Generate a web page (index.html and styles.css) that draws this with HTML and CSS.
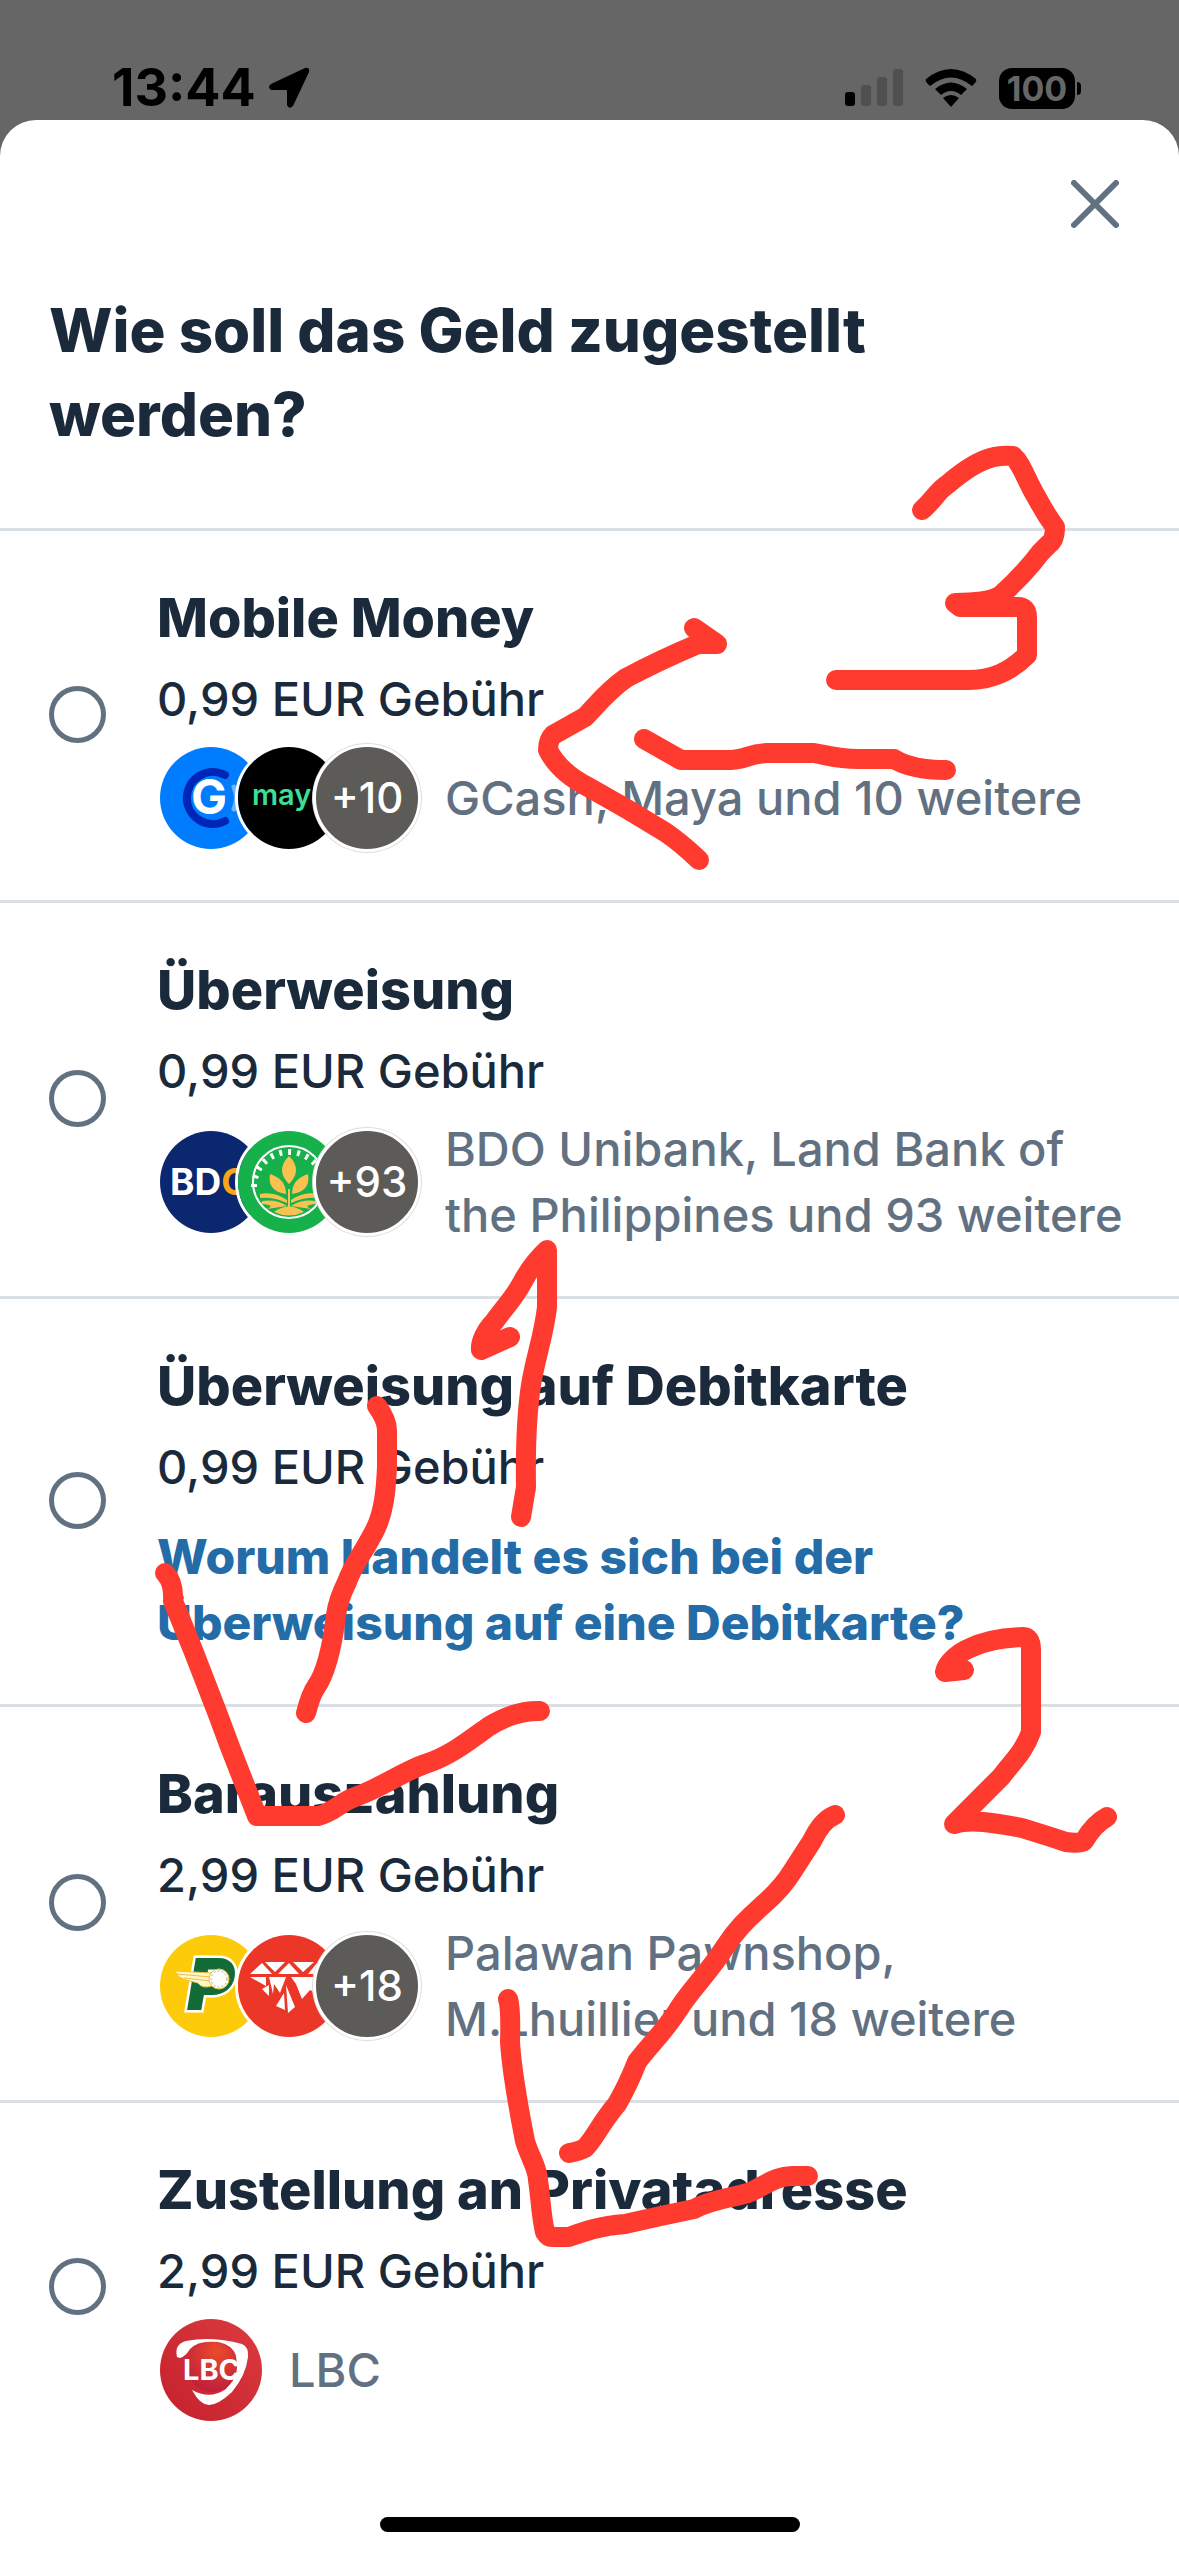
FILE: index.html
```html
<!DOCTYPE html>
<html lang="de">
<head>
    <meta charset="UTF-8">
    <meta name="viewport" content="width=device-width, initial-scale=1.0">
    <title>Zustellung</title>
    <link rel="stylesheet" href="styles.css">
</head>
<body>
    <!-- Status bar -->
    <header class="status-bar">
        <div class="status-left">
            <span class="time">13:44</span>
            <svg class="location" viewBox="0 0 42 42" aria-hidden="true">
                <path d="M37 1 L3 17 Q-1 20 3 23 L18 23 Q19 23 19 24 L19 38 Q21 43 25 39 L41 5 Q42 0 37 1 Z"/>
            </svg>
        </div>
        <div class="status-right">
            <svg class="signal" viewBox="0 0 58 38" aria-hidden="true">
                <rect x="0" y="23" width="10" height="14" rx="3"/>
                <rect class="off" x="16" y="16" width="10" height="21" rx="3"/>
                <rect class="off" x="32" y="8" width="10" height="29" rx="3"/>
                <rect class="off" x="48" y="0" width="10" height="37" rx="3"/>
            </svg>
            <svg class="wifi" viewBox="0 0 52 38" aria-hidden="true">
                <path d="M1 10 Q26 -10 51 10 Q52 12 50 14 L47 17 Q26 0 5 17 L2 14 Q0 12 1 10 Z"/>
                <path d="M10 20 Q26 7 42 20 L36 26 Q26 18 16 26 Z"/>
                <path d="M18 29 Q26 23 34 29 L26 38 Z"/>
            </svg>
            <div class="battery"><span class="battery-level">100</span></div>
        </div>
    </header>

    <main class="sheet">
        <div class="sheet-top">
            <button type="button" class="close" aria-label="Schließen">
                <svg viewBox="0 0 48 48" aria-hidden="true"><path d="M3 3 L45 45 M45 3 L3 45"/></svg>
            </button>
        </div>
        <h1 class="heading">Wie soll das Geld zugestellt werden?</h1>

        <ul class="options">
            <li class="option">
                <input type="radio" class="radio" name="delivery" id="mobile">
                <div class="details">
                    <label class="title" for="mobile">Mobile Money</label>
                    <p class="fee">0,99 EUR Gebühr</p>
                    <div class="providers">
                        <div class="logos">
                            <!-- GCash -->
                            <svg class="logo" viewBox="0 0 102 102" aria-hidden="true">
                                <rect width="102" height="102" fill="#007dfe"/>
                                <path d="M65 28 A26 26 0 1 0 65 74" fill="none" stroke="#0026b8" stroke-width="8" stroke-linecap="round"/>
                                <path d="M74 40 Q79 51 74 62" fill="none" stroke="#6cb5ff" stroke-width="5" stroke-linecap="round"/>
                                <text class="logo-g" x="49" y="67" text-anchor="middle">G</text>
                            </svg>
                            <!-- Maya -->
                            <svg class="logo" viewBox="0 0 102 102" aria-hidden="true">
                                <rect width="102" height="102" fill="#000"/>
                                <text class="logo-maya" x="14" y="58">maya</text>
                            </svg>
                            <span class="logo more">+10</span>
                        </div>
                        <p class="names">GCash, Maya und 10 weitere</p>
                    </div>
                </div>
            </li>

            <li class="option">
                <input type="radio" class="radio" name="delivery" id="bank">
                <div class="details">
                    <label class="title" for="bank">Überweisung</label>
                    <p class="fee">0,99 EUR Gebühr</p>
                    <div class="providers">
                        <div class="logos">
                            <!-- BDO -->
                            <svg class="logo" viewBox="0 0 102 102" aria-hidden="true">
                                <rect width="102" height="102" fill="#0a2770"/>
                                <text class="logo-bdo" x="10" y="64">BD<tspan fill="#f9a51a">O</tspan></text>
                            </svg>
                            <!-- Land Bank -->
                            <svg class="logo" viewBox="0 0 102 102" aria-hidden="true">
                                <rect width="102" height="102" fill="#16b14b"/>
                                <circle cx="51" cy="51" r="36" fill="none" stroke="#fff" stroke-width="2"/>
                                <path d="M16 56 A35 35 0 1 1 86 56" fill="none" stroke="#fff" stroke-width="6" stroke-dasharray="3 6"/>
                                <g fill="#fbc150">
                                    <path d="M51 25 Q37 39 51 53 Q65 39 51 25 Z"/>
                                    <path d="M32 43 Q29 60 48 63 Q48 48 32 43 Z"/>
                                    <path d="M70 43 Q73 60 54 63 Q54 48 70 43 Z"/>
                                    <path d="M22 63 Q36 60 49 69 L49 72 Q36 66 22 67 Z"/>
                                    <path d="M80 63 Q66 60 53 69 L53 72 Q66 66 80 67 Z"/>
                                    <path d="M24 70 Q38 68 49 75 L29 78 Q38 74 24 73 Z"/>
                                    <path d="M78 70 Q64 68 53 75 L73 78 Q64 74 78 73 Z"/>
                                    <path d="M36 81 Q51 70 66 81 Q51 88 36 81 Z"/>
                                </g>
                                <path d="M51 58 V83" stroke="#fbc150" stroke-width="2"/>
                            </svg>
                            <span class="logo more">+93</span>
                        </div>
                        <p class="names">BDO Unibank, Land Bank of the Philippines und 93 weitere</p>
                    </div>
                </div>
            </li>

            <li class="option">
                <input type="radio" class="radio" name="delivery" id="debit">
                <div class="details">
                    <label class="title" for="debit">Überweisung auf Debitkarte</label>
                    <p class="fee">0,99 EUR Gebühr</p>
                    <a class="help" href="#">Worum handelt es sich bei der Überweisung auf eine Debitkarte?</a>
                </div>
            </li>

            <li class="option">
                <input type="radio" class="radio" name="delivery" id="cash">
                <div class="details">
                    <label class="title" for="cash">Barauszahlung</label>
                    <p class="fee">2,99 EUR Gebühr</p>
                    <div class="providers">
                        <div class="logos">
                            <!-- Palawan -->
                            <svg class="logo" viewBox="0 0 102 102" aria-hidden="true">
                                <rect width="102" height="102" fill="#fdcb0a"/>
                                <text class="logo-p" x="27" y="75">P</text>
                                <path d="M15 36 L52 38 L52 51 Q42 54 38 48 L26 45 L19 42 Z" fill="#fff6cf" stroke="#eebf3d" stroke-width="1"/>
                                <path d="M17 39 L51 42 M24 43 L51 46" stroke="#eebf3d" stroke-width="1"/>
                                <circle cx="59" cy="44" r="10" fill="#fff" stroke="#eebf3d" stroke-width="1"/>
                                <circle cx="59" cy="44" r="8" fill="none" stroke="#9bb68a" stroke-width="1" stroke-dasharray="2 2"/>
                            </svg>
                            <!-- M Lhuillier -->
                            <svg class="logo" viewBox="0 0 102 102" aria-hidden="true">
                                <rect width="102" height="102" fill="#ec3627"/>
                                <g fill="#fff">
                                    <path d="M24 28 L12 39 L34 39 Z M27 27 H47 L37 37 Z M51 28 L40 39 H61 Z M55 27 H76 L65 37 Z M79 28 L70 39 H90 Z"/>
                                    <path d="M12 42 H28 V51 Z M24 54 L31 50 V61 Z"/>
                                    <path d="M31 42 H48 L42 58 L36 49 L35 59 Z"/>
                                    <path d="M48 50 L50 78 L57 72 Z M46 58 L47 75 L38 71 Z"/>
                                    <path d="M53 42 H90 L78 58 L72 55 L64 64 L58 49 Z"/>
                                </g>
                            </svg>
                            <span class="logo more">+18</span>
                        </div>
                        <p class="names">Palawan Pawnshop, M.Lhuillier und 18 weitere</p>
                    </div>
                </div>
            </li>

            <li class="option">
                <input type="radio" class="radio" name="delivery" id="home">
                <div class="details">
                    <label class="title" for="home">Zustellung an Privatadresse</label>
                    <p class="fee">2,99 EUR Gebühr</p>
                    <div class="providers">
                        <div class="logos">
                            <!-- LBC -->
                            <svg class="logo" viewBox="0 0 102 102" aria-hidden="true">
                                <defs>
                                    <linearGradient id="lbcBack" x1="0" y1="1" x2="1" y2="0">
                                        <stop offset="0" stop-color="#c3202c"/>
                                        <stop offset="1" stop-color="#dd3b40"/>
                                    </linearGradient>
                                    <radialGradient id="lbcBall" cx="0.6" cy="0.2" r="0.8">
                                        <stop offset="0" stop-color="#ea4a2a"/>
                                        <stop offset="1" stop-color="#c01f3c"/>
                                    </radialGradient>
                                </defs>
                                <rect width="102" height="102" fill="url(#lbcBack)"/>
                                <path d="M17 38 Q14 25 26 22 Q52 17 82 25 Q89 28 88 38 Q86 56 72 73 Q58 86 49 86 Q40 86 32 71 Q50 81 66 70 Q79 55 76 37 Q73 26 58 23 Q38 21 30 30 Q25 38 20 39 Z" fill="#fff"/>
                                <circle cx="52" cy="48" r="25" fill="url(#lbcBall)"/>
                                <text class="logo-lbc" x="23" y="61">LBC</text>
                            </svg>
                        </div>
                        <p class="names">LBC</p>
                    </div>
                </div>
            </li>
        </ul>
        <div class="home-indicator"></div>
    </main>

    <!-- Handwritten marks over the list -->
    <svg class="marks" viewBox="0 0 1179 2556" aria-hidden="true">
        <!-- 3 and its arrow -->
        <path d="M922 510 C932 502 938 490 948 484 C962 472 980 460 994 457 Q1002 455 1013 456 C1022 464 1026 480 1037 498 Q1046 515 1055 527 Q1055 540 1049 544 Q1040 552 1033 562 Q1018 580 1000 596 Q988 603 955 603 L960 607 H1018 Q1027 607 1027 617 V655 C1010 672 992 680 968 680 H836"/>
        <path d="M694 628 L717 644 H698 Q660 660 626 678 C606 692 596 706 585 717 L553 735 Q548 740 548 750 C556 766 570 778 590 788 Q628 809 665 832 Q680 842 699 860"/>
        <path d="M644 739 L681 760 H730 C745 760 750 753 768 753 H814 C830 756 840 759 858 759 H894 Q912 770 946 770"/>
        <!-- 1 and its arrow -->
        <path d="M510 1337 L481 1350 C480 1342 486 1330 494 1322 C504 1308 514 1298 522 1283 Q532 1264 547 1250 V1307 C544 1335 536 1355 531 1385 Q525 1425 526 1487 L521 1517"/>
        <path d="M377 1406 Q387 1420 387 1430 V1467 C386 1490 384 1512 375 1530 C364 1552 352 1566 347 1582 Q338 1600 336 1615 C333 1640 328 1670 316 1687 Q311 1694 306 1713"/>
        <path d="M165 1573 Q174 1582 173 1601 L193 1650 L217 1712 L230 1747 L257 1816 H318 C335 1812 340 1802 355 1797 C385 1786 402 1772 425 1764 C450 1756 470 1740 488 1727 Q515 1710 540 1711"/>
        <!-- 2 and its arrow -->
        <path d="M964 1670 L945 1672 C947 1662 960 1652 970 1648 Q990 1638 1022 1637 Q1031 1636 1031 1650 V1732 C1024 1752 1012 1762 1001 1777 Q980 1798 954 1824 C972 1818 1000 1824 1022 1828 Q1048 1836 1066 1842 Q1080 1844 1084 1841 Q1094 1824 1107 1817"/>
        <path d="M835 1815 Q822 1820 812 1841 L792 1872 Q782 1888 765 1903 C745 1921 736 1930 725 1947 C708 1974 690 1990 678 2010 C664 2032 648 2047 637 2062 Q628 2085 617 2104 C600 2124 595 2138 585 2148 Q580 2151 569 2153"/>
        <path d="M508 1999 Q511 2008 510 2042 C512 2075 519 2110 525 2141 C530 2158 538 2168 538 2180 C541 2200 541 2215 545 2232 Q548 2237 552 2237 H569 C585 2231 600 2226 625 2224 Q660 2216 694 2209 C710 2200 730 2198 748 2193 C765 2186 775 2176 792 2176 H808"/>
    </svg>
</body>
</html>
```
FILE: styles.css
```css
* {
    box-sizing: border-box;
}

body {
    position: relative;
    display: flex;
    flex-direction: column;
    min-height: 100vh;
    margin: 0;
    background-color: #666;
    color: #1b2a3b;
    font-family: Inter, "Liberation Sans", sans-serif;
}

/* Status bar */
.status-bar {
    display: flex;
    justify-content: space-between;
    align-items: flex-end;
    height: 120px;
    padding: 0 104px 8px 112px;
    color: #000;
}

.status-left, .status-right {
    display: flex;
    align-items: center;
    height: 48px;
}

.status-left {
    gap: 12px;
}

.status-right {
    gap: 22px;
}

.time {
    font-size: 52px;
    font-weight: 700;
    line-height: 48px;
}

.location {
    width: 42px;
    height: 42px;
}

.signal {
    width: 58px;
    height: 38px;
}

.signal .off {
    fill: #505050;
}

.wifi {
    width: 52px;
    height: 38px;
}

.battery {
    position: relative;
    width: 76px;
    height: 41px;
    border-radius: 13px;
    background-color: #000;
    color: #666;
    text-align: center;
}

/* Battery tip */
.battery::after {
    content: "";
    position: absolute;
    top: 14px;
    right: -6px;
    width: 4px;
    height: 13px;
    border-radius: 0 4px 4px 0;
    background-color: #000;
}

.battery-level {
    font-size: 34px;
    font-weight: 700;
    line-height: 41px;
}

/* Sheet */
.sheet {
    display: flex;
    flex-direction: column;
    flex: 1;
    border-radius: 36px 36px 0 0;
    background-color: #fff;
}

.sheet-top {
    display: flex;
    justify-content: flex-end;
    padding: 48px 48px 0;
}

.close {
    width: 72px;
    height: 72px;
    padding: 12px;
    border: none;
    background: none;
    cursor: pointer;
}

.close svg {
    display: block;
    width: 48px;
    height: 48px;
    fill: none;
    stroke: #627182;
    stroke-width: 6;
    stroke-linecap: round;
}

.heading {
    margin: 0;
    padding: 48px 144px 72px 49px;
    font-size: 60px;
    font-weight: 800;
    line-height: 84px;
}

.options {
    margin: 0;
    padding: 0;
    list-style: none;
}

.option {
    display: flex;
    align-items: center;
    gap: 51px;
    padding: 45px 48px 48px 49px;
    border-top: 3px solid #d9dfe5;
}

.radio {
    appearance: none;
    flex-shrink: 0;
    width: 57px;
    height: 57px;
    margin: 0;
    border: 5px solid #627182;
    border-radius: 50%;
    cursor: pointer;
}

.radio:checked {
    border-width: 16px;
}

.details {
    flex: 1;
}

.title {
    display: block;
    margin-bottom: 6px;
    font-size: 54px;
    font-weight: 800;
    line-height: 84px;
}

.fee, .names {
    margin: 0;
    font-size: 47px;
    font-weight: 500;
    line-height: 66px;
}

.providers {
    display: flex;
    align-items: center;
    gap: 24px;
    margin-top: 12px;
}

.logos {
    display: flex;
    flex-shrink: 0;
}

.logo {
    width: 108px;
    height: 108px;
    border: 3px solid #fff;
    border-radius: 50%;
}

.logo + .logo {
    margin-left: -30px;
}

.more {
    z-index: 1;
    background-color: #5d5b57;
    box-shadow: 0 0 0 1px #ddd;
    color: #fff;
    font-size: 42px;
    font-weight: 500;
    line-height: 102px;
    text-align: center;
}

.names {
    color: #627182;
}

.help {
    display: block;
    margin-top: 24px;
    color: #236ca7;
    font-size: 48px;
    font-weight: 800;
    line-height: 66px;
    text-decoration: none;
}

/* Lettering inside the logos */
.logo-g {
    fill: #fff;
    font-size: 48px;
    font-weight: 700;
}

.logo-maya {
    fill: #3ddc97;
    font-size: 29px;
    font-weight: 600;
}

.logo-bdo {
    fill: #fff;
    font-size: 37px;
    font-weight: 700;
}

.logo-p {
    fill: #136c37;
    stroke: #fff;
    stroke-width: 5px;
    paint-order: stroke;
    font-size: 72px;
    font-style: italic;
    font-weight: 900;
}

.logo-lbc {
    fill: #fff;
    font-size: 29px;
    font-weight: 700;
}

.home-indicator {
    align-self: center;
    width: 420px;
    height: 15px;
    margin-top: auto;
    margin-bottom: 24px;
    border-radius: 8px;
    background-color: #000;
}

.marks {
    position: absolute;
    top: 0;
    left: 0;
    z-index: 2;
    width: 100%;
    fill: none;
    stroke: #ff3b30;
    stroke-width: 20;
    stroke-linecap: round;
    stroke-linejoin: round;
    pointer-events: none;
}
```
